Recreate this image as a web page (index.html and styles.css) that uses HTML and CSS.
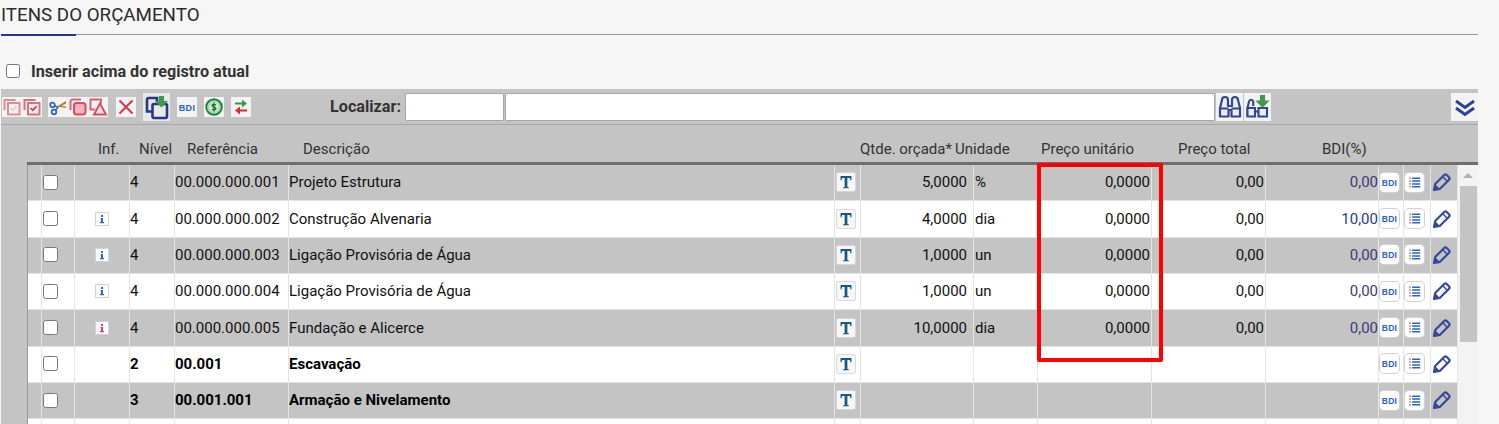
FILE: index.html
```html
<!DOCTYPE html>
<html lang="pt-BR">
<head>
<meta charset="utf-8">
<title>Itens do orçamento</title>
<link rel="stylesheet" href="styles.css">
</head>
<body>
<svg class="defs" aria-hidden="true">
  <symbol id="i-bdi" viewBox="0 0 20 20"><text x="10" y="13.500" text-anchor="middle" class="bdi-text">BDI</text></symbol>
  <symbol id="i-list" viewBox="0 0 20 20"><path d="M4.500 5.500h1.600M4.500 8.500h1.600M4.500 11.500h1.600M4.500 14.500h1.600" stroke="#b5532f" stroke-width="1.300" fill="none"/><path d="M7.500 5.500h8.500M7.500 8.500h8.500M7.500 11.500h8.500M7.500 14.500h8.500" stroke="#2a62c4" stroke-width="1.600" fill="none"/></symbol>
  <symbol id="i-pen" viewBox="0 0 20 20"><path d="M2 18l1.200-6 9-9a1.800 1.800 0 0 1 2.500 0l2.300 2.300a1.800 1.800 0 0 1 0 2.500l-9 9z" fill="none" stroke="#36479c" stroke-width="2.200" stroke-linejoin="round"/><path d="M2.500 17.500L3.500 12.500l4 4z" fill="#36479c"/><path d="M10.800 4.800l4.400 4.400" stroke="#36479c" stroke-width="1.500"/></symbol>
  <symbol id="i-t" viewBox="0 0 22 22"><rect x=".5" y=".5" width="21" height="21" rx="2" fill="#f6f6f6" stroke="#d4d4d4"/><path d="M5 4.500h12v4.500h-1.100l-.6-2.500h-2.800v10l1.700.6v.9H7.800v-.9l1.700-.6v-10H6.700L6.100 9H5z" fill="#17597f"/></symbol>
  <symbol id="i-info" viewBox="0 0 14 14"><rect x=".5" y=".5" width="13" height="13" fill="#fff" stroke="#d0d4dc"/><path d="M6 3h2v2H6zM5.500 6H8v4h1v1.300H5V10h1V7.200h-.5z" fill="currentColor"/></symbol>
  <symbol id="i-copy-a" viewBox="0 0 20 20"><path d="M2.500 13V3h11M6 6h11.500v11.500H6z" fill="none" stroke="#e58a94" stroke-width="2"/><path d="M8.500 11l2.200 2.200 4-4" fill="none" stroke="#ecc4c7" stroke-width="1.600"/></symbol>
  <symbol id="i-copy-b" viewBox="0 0 20 20"><path d="M2.500 13V3h11M6 6h11.500v11.500H6z" fill="none" stroke="#dd6f7b" stroke-width="2"/><path d="M8.500 11l2.200 2.200 4-4" fill="none" stroke="#d83a4a" stroke-width="1.700"/></symbol>
  <symbol id="i-cut" viewBox="0 0 20 20"><circle cx="4.500" cy="8" r="2.300" fill="none" stroke="#2a62c4" stroke-width="1.700"/><circle cx="6" cy="15" r="2.300" fill="none" stroke="#2a62c4" stroke-width="1.700"/><path d="M6.500 9l3.500 1M7.500 13l3-3" stroke="#2a62c4" stroke-width="1.400"/><path d="M9 9.500l9-5.500v2.500l-4.500 2.500 4.500.5v1.500z" fill="#a8852a"/></symbol>
  <symbol id="i-squares" viewBox="0 0 20 20"><path d="M2.500 13V4.500a2 2 0 0 1 2-2H13" fill="none" stroke="#dc6472" stroke-width="2"/><rect x="6" y="6" width="11.500" height="11.500" rx="2.500" fill="#f1b5bc" stroke="#d94c5e" stroke-width="2"/></symbol>
  <symbol id="i-paste" viewBox="0 0 20 20"><path d="M7 12.500H2.500v-10H13v4" fill="none" stroke="#d9606e" stroke-width="1.900"/><path d="M12 6.500l6 11H6z" fill="#fbe3e5" stroke="#d94c5e" stroke-width="1.900"/></symbol>
  <symbol id="i-x" viewBox="0 0 20 20"><path d="M3.500 3.500l13 13M16.500 3.500l-13 13" stroke="#d93a4a" stroke-width="2.100" fill="none"/></symbol>
  <symbol id="i-export" viewBox="0 0 26 26"><path d="M8.500 17.500H3V5.500a1.500 1.500 0 0 1 1.500-1.500H13v4" fill="none" stroke="#25368c" stroke-width="2.600"/><rect x="8.500" y="10" width="14.500" height="14" rx="1.500" fill="none" stroke="#25368c" stroke-width="2.600"/><path d="M15 2h5v5h4l-6.500 6.500L11 7h4z" fill="#3f9a46"/></symbol>
  <symbol id="i-money" viewBox="0 0 20 20"><circle cx="10" cy="10" r="7.800" fill="#a9dcae" stroke="#23803a" stroke-width="1.900"/><circle cx="10" cy="10" r="4.600" fill="#d6f0d8"/><path d="M10 5.500v9M12 8c-1-1-4-1-4 .6S12 10 12 11.600 9 13 8 12" fill="none" stroke="#176b26" stroke-width="1.300"/></symbol>
  <symbol id="i-swap" viewBox="0 0 20 20"><path d="M4 5.500h7V2.500l5 4-5 4v-3H4z" fill="#3b9a3f"/><path d="M16 12.500H9v-3l-5 4 5 4v-3h7z" fill="#e0262e"/></symbol>
  <symbol id="i-bino" viewBox="0 0 26 26"><path d="M3 22.500V14l2-8a2.700 2.700 0 0 1 6 0v6h4V6a2.700 2.700 0 0 1 6 0l2 8v8.500h-8.500V16h-3v6.500z" fill="#eef0f8" stroke="#34449c" stroke-width="2.200" stroke-linejoin="round"/><path d="M3 14.500h8.500M14.500 14.500H23" stroke="#34449c" stroke-width="2.200"/></symbol>
  <symbol id="i-bino-add" viewBox="0 0 26 26"><path d="M2.500 22.500V14l1.500-6.500a2.200 2.200 0 0 1 4.300 0V12" fill="#eef0f8" stroke="#34449c" stroke-width="2.100" stroke-linejoin="round"/><path d="M2.500 14h7.500v8.500H2.500zM13.500 14h8.500v8.500h-8.500zM10 17.500h3.500" fill="#eef0f8" stroke="#34449c" stroke-width="2.100"/><path d="M15 1h5v5.500h4.500L17.500 14l-7-7.500H15z" fill="#3f9a46"/></symbol>
  <symbol id="i-chev" viewBox="0 0 26 26"><path d="M4 7l9 6.500L22 7M4 14l9 6.500L22 14" fill="none" stroke="#2f3f9c" stroke-width="3"/></symbol>
</svg>

<section class="section">
  <h2 class="section-title"><span class="section-title-text">ITENS DO ORÇAMENTO</span></h2>
  <label class="insert-option"><input type="checkbox" class="insert-check"><span>Inserir acima do registro atual</span></label>

  <div class="panel">
    <div class="toolbar">
      <div class="tool-group group-a">
        <span class="tool"><svg><use href="#i-copy-a"/></svg></span>
        <span class="tool"><svg><use href="#i-copy-b"/></svg></span>
      </div>
      <div class="tool-group group-b">
        <span class="tool"><svg><use href="#i-cut"/></svg></span>
        <span class="tool"><svg><use href="#i-squares"/></svg></span>
        <span class="tool"><svg><use href="#i-paste"/></svg></span>
      </div>
      <span class="tool tool-x"><svg><use href="#i-x"/></svg></span>
      <span class="tool tool-big tool-export"><svg><use href="#i-export"/></svg></span>
      <span class="tool tool-bdi"><svg><use href="#i-bdi"/></svg></span>
      <span class="tool tool-gap"><svg><use href="#i-money"/></svg></span>
      <span class="tool tool-gap"><svg><use href="#i-swap"/></svg></span>
      <span class="find-label">Localizar:</span>
      <input type="text" class="find-field find-short">
      <input type="text" class="find-field find-long">
      <span class="tool tool-big tool-bino"><svg><use href="#i-bino"/></svg></span>
      <span class="tool tool-big tool-bino2"><svg><use href="#i-bino-add"/></svg></span>
      <span class="tool tool-big tool-chev"><svg><use href="#i-chev"/></svg></span>
    </div>

    <div class="grid-head">
      <span>Inf.</span><span>Nível</span><span>Referência</span><span>Descrição</span>
      <span>Qtde. orçada*</span><span>Unidade</span><span>Preço unitário</span><span>Preço total</span><span>BDI(%)</span>
    </div>

    <div class="grid-body">
      <table class="items">
        <colgroup>
          <col class="c-gap"><col class="c-check"><col class="c-inf"><col class="c-level"><col class="c-ref"><col class="c-desc"><col class="c-t"><col class="c-qty"><col class="c-unit"><col class="c-price"><col class="c-total"><col class="c-bdi"><col class="c-b1"><col class="c-b2"><col class="c-b3">
        </colgroup>
        <tbody>
          <tr class="row-gray">
            <td></td><td><input type="checkbox" class="row-check"></td><td></td><td>4</td><td>00.000.000.001</td><td>Projeto Estrutura</td>
            <td class="cell-icon"><svg class="icon-t"><use href="#i-t"/></svg></td><td class="num num-qty">5,0000</td><td class="cell-unit">%</td><td class="num">0,0000</td><td class="num">0,00</td><td class="num num-bdi">0,00</td>
            <td class="cell-icon"><span class="mini"><svg><use href="#i-bdi"/></svg></span></td><td class="cell-icon"><span class="mini"><svg><use href="#i-list"/></svg></span></td><td class="cell-icon"><svg class="icon-pen"><use href="#i-pen"/></svg></td>
          </tr>
          <tr>
            <td></td><td><input type="checkbox" class="row-check"></td><td class="cell-info"><svg class="icon-info"><use href="#i-info"/></svg></td><td>4</td><td>00.000.000.002</td><td>Construção Alvenaria</td>
            <td class="cell-icon"><svg class="icon-t"><use href="#i-t"/></svg></td><td class="num num-qty">4,0000</td><td class="cell-unit">dia</td><td class="num">0,0000</td><td class="num">0,00</td><td class="num num-bdi num-bdi-strong">10,00</td>
            <td class="cell-icon"><span class="mini"><svg><use href="#i-bdi"/></svg></span></td><td class="cell-icon"><span class="mini"><svg><use href="#i-list"/></svg></span></td><td class="cell-icon"><svg class="icon-pen"><use href="#i-pen"/></svg></td>
          </tr>
          <tr class="row-gray">
            <td></td><td><input type="checkbox" class="row-check"></td><td class="cell-info"><svg class="icon-info"><use href="#i-info"/></svg></td><td>4</td><td>00.000.000.003</td><td>Ligação Provisória de Água</td>
            <td class="cell-icon"><svg class="icon-t"><use href="#i-t"/></svg></td><td class="num num-qty">1,0000</td><td class="cell-unit">un</td><td class="num">0,0000</td><td class="num">0,00</td><td class="num num-bdi">0,00</td>
            <td class="cell-icon"><span class="mini"><svg><use href="#i-bdi"/></svg></span></td><td class="cell-icon"><span class="mini"><svg><use href="#i-list"/></svg></span></td><td class="cell-icon"><svg class="icon-pen"><use href="#i-pen"/></svg></td>
          </tr>
          <tr>
            <td></td><td><input type="checkbox" class="row-check"></td><td class="cell-info"><svg class="icon-info"><use href="#i-info"/></svg></td><td>4</td><td>00.000.000.004</td><td>Ligação Provisória de Água</td>
            <td class="cell-icon"><svg class="icon-t"><use href="#i-t"/></svg></td><td class="num num-qty">1,0000</td><td class="cell-unit">un</td><td class="num">0,0000</td><td class="num">0,00</td><td class="num num-bdi">0,00</td>
            <td class="cell-icon"><span class="mini"><svg><use href="#i-bdi"/></svg></span></td><td class="cell-icon"><span class="mini"><svg><use href="#i-list"/></svg></span></td><td class="cell-icon"><svg class="icon-pen"><use href="#i-pen"/></svg></td>
          </tr>
          <tr class="row-gray">
            <td></td><td><input type="checkbox" class="row-check"></td><td class="cell-info"><svg class="icon-info icon-info-pink"><use href="#i-info"/></svg></td><td>4</td><td>00.000.000.005</td><td>Fundação e Alicerce</td>
            <td class="cell-icon"><svg class="icon-t"><use href="#i-t"/></svg></td><td class="num num-qty">10,0000</td><td class="cell-unit">dia</td><td class="num">0,0000</td><td class="num">0,00</td><td class="num num-bdi">0,00</td>
            <td class="cell-icon"><span class="mini"><svg><use href="#i-bdi"/></svg></span></td><td class="cell-icon"><span class="mini"><svg><use href="#i-list"/></svg></span></td><td class="cell-icon"><svg class="icon-pen"><use href="#i-pen"/></svg></td>
          </tr>
          <tr class="row-bold">
            <td></td><td><input type="checkbox" class="row-check"></td><td></td><td>2</td><td>00.001</td><td>Escavação</td>
            <td class="cell-icon"><svg class="icon-t"><use href="#i-t"/></svg></td><td></td><td></td><td></td><td></td><td></td>
            <td class="cell-icon"><span class="mini"><svg><use href="#i-bdi"/></svg></span></td><td class="cell-icon"><span class="mini"><svg><use href="#i-list"/></svg></span></td><td class="cell-icon"><svg class="icon-pen"><use href="#i-pen"/></svg></td>
          </tr>
          <tr class="row-gray row-bold">
            <td></td><td><input type="checkbox" class="row-check"></td><td></td><td>3</td><td>00.001.001</td><td>Armação e Nivelamento</td>
            <td class="cell-icon"><svg class="icon-t"><use href="#i-t"/></svg></td><td></td><td></td><td></td><td></td><td></td>
            <td class="cell-icon"><span class="mini"><svg><use href="#i-bdi"/></svg></span></td><td class="cell-icon"><span class="mini"><svg><use href="#i-list"/></svg></span></td><td class="cell-icon"><svg class="icon-pen"><use href="#i-pen"/></svg></td>
          </tr>
          <tr>
            <td></td><td></td><td></td><td></td><td></td><td></td><td></td><td></td><td></td><td></td><td></td><td></td><td></td><td></td><td></td>
          </tr>
        </tbody>
      </table>
      <div class="scrollbar"><span class="scroll-up"></span><span class="scroll-thumb"></span></div>
      <div class="highlight"></div>
    </div>
  </div>
</section>
</body>
</html>
```
FILE: styles.css
```css
html, body {
  margin: 0;
  height: 424px;
  overflow: hidden;
  background: #f6f6f6;
  font-family: Roboto, "Liberation Sans", sans-serif;
  color: #222;
}
.defs { display: none; }
.section { padding-left: 1px; width: 1477px; }
.section-title {
  margin: 0;
  height: 35px;
  box-sizing: border-box;
  border-bottom: 1px solid #999;
  font-size: 18.750px;
  font-weight: 400;
  line-height: 31px;
  color: #2b2b2b;
}
.section-title-text {
  display: block;
  box-sizing: border-box;
  width: 75px;
  height: 36px;
  white-space: nowrap;
  border-bottom: 2px solid #2a3489;
}
.insert-option {
  display: flex;
  align-items: center;
  gap: 11px;
  height: 24px;
  margin-top: 24px;
  padding-left: 5px;
  font-size: 16.200px;
  font-weight: 700;
  color: #333;
}
.insert-check { margin: 0; width: 14px; height: 14px; }
.panel { background: #c4c4c4; margin-top: 6px; }
.toolbar {
  display: flex;
  align-items: center;
  height: 35px;
  border-bottom: 1px solid #a8a8a8;
}
.tool {
  display: flex;
  align-items: center;
  justify-content: center;
  width: 20px;
  height: 20px;
  background: #f3f3f3;
  flex: none;
}
.tool svg { width: 20px; height: 20px; display: block; }
.tool-big { width: 27px; height: 28px; }
.tool-big svg { width: 26px; height: 26px; }
.tool-group { display: flex; }
.group-a { margin-left: 1px; }
.group-b { margin-left: 6px; }
.tool-x { margin-left: 8px; }
.tool-export { margin-left: 7px; background: #e8e8e8; }
.tool-bdi { margin-left: 7px; }
.tool-gap { margin-left: 7px; }
.find-label {
  margin-left: 79px;
  width: 75px;
  font-size: 16.200px;
  font-weight: 700;
  color: #333;
  flex: none;
  white-space: nowrap;
}
.find-field {
  box-sizing: border-box;
  height: 28px;
  margin: 0 1px 0 0;
  padding: 0 4px;
  border: 1px solid #a6a6a6;
  border-radius: 2px;
  background: #fff;
  flex: none;
}
.find-short { width: 99px; }
.find-long { width: 710px; }
.tool-bino2 { margin-left: 1px; }
.tool-chev { margin-left: auto; }
.grid-head {
  display: grid;
  grid-template-columns: 41px 48px 116px 557px 95px 86px 137px 144px 1fr;
  height: 37px;
  border-bottom: 3px solid #6e6e6e;
  margin-left: 26px;
  padding-left: 71px;
  font-size: 15px;
  line-height: 48px;
  color: #333;
  white-space: nowrap;
}
.grid-body {
  position: relative;
  display: flex;
  align-items: flex-start;
  padding-left: 26px;
  height: 260px;
}
.items {
  table-layout: fixed;
  border-collapse: separate;
  border-spacing: 0;
  width: 1431px;
  flex: none;
  border-left: 1px solid #999;
  font-size: 15px;
  color: #111;
  background: #fff;
}
.c-gap { width: 14px; }
.c-check { width: 33px; }
.c-inf { width: 55px; }
.c-level { width: 45px; }
.c-ref { width: 114px; }
.c-desc { width: 546px; }
.c-t { width: 26px; }
.c-qty { width: 113px; }
.c-unit { width: 64px; }
.c-price { width: 114px; }
.c-total { width: 114px; }
.c-bdi { width: 113px; }
.c-b1 { width: 25px; }
.c-b2 { width: 27px; }
.c-b3 { width: 27px; }
.items tr { height: 36.350px; }
.items td {
  padding: 0 0 1px;
  border-right: 1px solid #e4e4e4;
  border-bottom: 1px solid #e4e4e4;
  white-space: nowrap;
  overflow: hidden;
  vertical-align: middle;
}
.row-gray td { background: #c4c4c4; }
.row-bold td { font-weight: 700; color: #000; }
.row-check { display: block; width: 15px; height: 15px; margin: 0 0 0 1px; }
.items td.num { text-align: right; padding-right: 1px; }
.items td.num-qty { padding-right: 6px; }
.items td.cell-unit { padding-left: 1px; }
.num-bdi { color: #3c3c7a; }
.items td.num-bdi { padding-right: 0; }
.num-bdi-strong { color: #2a3a8c; }
.cell-icon svg { display: block; }
.icon-info { display: block; width: 14px; height: 14px; color: #2d6cc0; margin-left: 20px; }
.icon-info-pink { color: #d8389a; }
.icon-t { width: 20px; height: 20px; margin-left: 1px; }
.icon-pen { width: 20px; height: 20px; margin-left: 1px; }
.mini {
  display: flex;
  align-items: center;
  justify-content: center;
  width: 19px;
  height: 19px;
  margin-left: 1px;
  background: #fff;
  border-radius: 4px;
  box-shadow: 0 0 0 1px #d2d2d2;
}
.mini svg { width: 19px; height: 19px; }
.bdi-text {
  font-family: "Liberation Sans", sans-serif;
  font-size: 9px;
  font-weight: 700;
  letter-spacing: .3px;
  fill: #2a62c4;
}
.scrollbar {
  width: 20px;
  height: 260px;
  background: #f3f3f3;
  flex: none;
  display: flex;
  flex-direction: column;
  align-items: center;
}
.scroll-up {
  margin-top: 8px;
  width: 0;
  height: 0;
  border-left: 5px solid transparent;
  border-right: 5px solid transparent;
  border-bottom: 5px solid #b0b0b0;
}
.scroll-thumb {
  margin-top: 8px;
  width: 17px;
  height: 156px;
  background: #c4c4c4;
}
.highlight {
  position: absolute;
  left: 1036px;
  top: -2px;
  width: 118px;
  height: 191px;
  border: 4px solid #f00;
  border-radius: 2px;
  pointer-events: none;
}
```
